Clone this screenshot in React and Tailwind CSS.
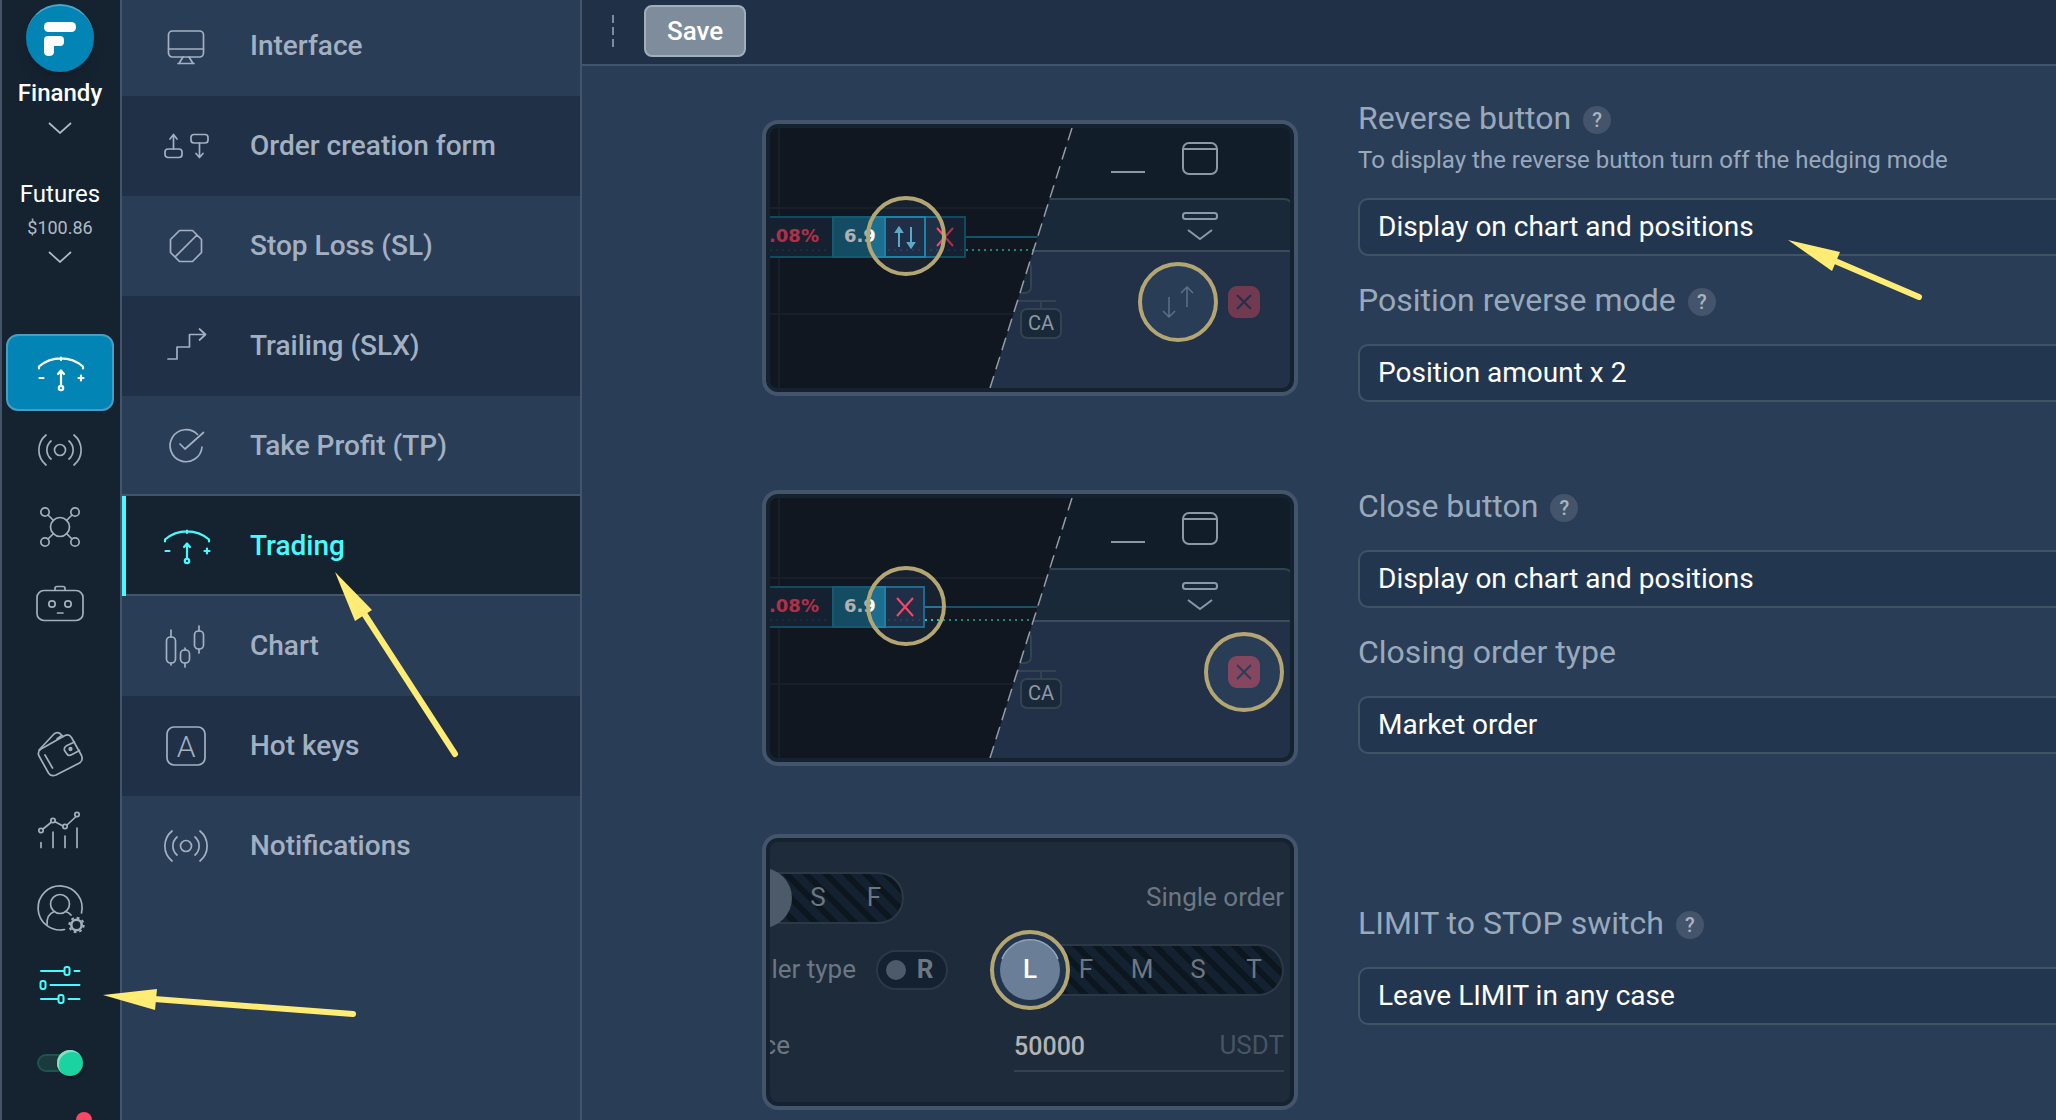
import { useState } from "react";
import clsx from "clsx";

const FONT = "font-['Roboto','Noto_Sans',sans-serif]";

function Icon({ children, className }) {
  return (
    <svg
      viewBox="0 0 48 48"
      className={clsx("size-12 shrink-0 overflow-visible", className)}
      fill="none"
      stroke="currentColor"
      strokeWidth="1.7"
      strokeLinecap="round"
      strokeLinejoin="round"
      aria-hidden="true"
    >
      {children}
    </svg>
  );
}

function GaugeIcon() {
  return (
    <Icon>
      <g strokeWidth="2.2">
        <path d="M3 19.5V17.5A34 34 0 0 1 47 17.5V19.5M25 8.5V11" />
        <path d="M25 22V36M22 25L25 21.5L28 25" />
        <circle cx="25" cy="39" r="2.2" />
        <path d="M3.5 29H7.5M45 26.5V31.5M42.5 29H47.5" />
      </g>
    </Icon>
  );
}

function SignalIcon() {
  return (
    <Icon>
      <circle cx="24" cy="24" r="5.5" />
      <path d="M15 15C9.5 20 9.5 28 15 33M33 15C38.5 20 38.5 28 33 33" />
      <path d="M10 9C.5 17 .5 31 10 39M38 9C47.5 17 47.5 31 38 39" />
    </Icon>
  );
}

function MonitorIcon() {
  return (
    <Icon>
      <rect x="6.5" y="9" width="35" height="26" rx="4" />
      <path d="M6.5 27H41.5M21 35L17 41.5M27 35L31 41.5M16 41.5H32" />
    </Icon>
  );
}

function OrderIcon() {
  return (
    <Icon>
      <path d="M11.5 27V13M8 17L11.5 12.5L15 17M37.5 21V35M34 31.5L37.5 35.5L41 31.5" />
      <rect x="3" y="27" width="17" height="8.5" rx="3" />
      <rect x="29" y="12.5" width="17" height="8.5" rx="3" />
    </Icon>
  );
}

function StopIcon() {
  return (
    <Icon>
      <path d="M17.5 8.5H30.5L39.5 17.5V30.5L30.5 39.5H17.5L8.5 30.5V17.5ZM35 13L13 35" />
    </Icon>
  );
}

function TrailingIcon() {
  return (
    <Icon>
      <path d="M6 37H15V25H27.5V12.5H43.5M37.5 7L43.5 12.5L37.5 18" />
    </Icon>
  );
}

function TakeProfitIcon() {
  return (
    <Icon>
      <path d="M35.5 12.5A16 16 0 1 0 40 25M18 22L23 27L41.5 10.5" />
    </Icon>
  );
}

function CandlesIcon() {
  return (
    <Icon>
      <rect x="4.5" y="15" width="9" height="26" rx="4" />
      <rect x="18.5" y="28" width="9" height="13" rx="4" />
      <rect x="32.5" y="9" width="9" height="18" rx="4" />
      <path d="M9 8V15M9 41V43M23 26V28M23 41V45M37 4V9M37 27V31" />
    </Icon>
  );
}

function HotKeyIcon() {
  return (
    <Icon>
      <rect x="5" y="5" width="38" height="38" rx="7" />
      <text x="24" y="35" textAnchor="middle" fontSize="30" fontWeight="300" fill="currentColor" stroke="none">
        A
      </text>
    </Icon>
  );
}

function NodesIcon() {
  return (
    <Icon>
      <circle cx="24" cy="24" r="9.5" />
      <circle cx="9" cy="9" r="4.2" />
      <circle cx="39" cy="9" r="4.2" />
      <circle cx="9" cy="39" r="4.2" />
      <circle cx="39" cy="39" r="4.2" />
      <path d="M12 12L17.5 17.5M36 12L30.5 17.5M12 36L17.5 30.5M36 36L30.5 30.5" />
    </Icon>
  );
}

function RobotIcon() {
  return (
    <Icon>
      <rect x="1" y="10.5" width="46" height="30" rx="7" />
      <path d="M19 10V8.5Q19 6.5 21 6.5H27Q29 6.5 29 8.5V10M21.5 33H27" />
      <circle cx="16" cy="24" r="3.2" />
      <circle cx="32" cy="24" r="3.2" />
    </Icon>
  );
}

function WalletIcon() {
  return (
    <Icon>
      <path d="M5 19L29 5.5Q33 3.5 35.5 7.5L45.5 25.5Q47.5 30.5 43.5 33L20 45Q15 47 12.5 43L3 26Q1 21.5 5 19Z" />
      <path d="M3 20L18 4Q21 1.5 24 3.5L27 6.5M21 9L25 6" />
      <path d="M38.5 12L31 15.5Q27.5 17.5 28.5 20.5L31 24Q32.5 26.5 36 24.5L43.5 20.5" />
      <path d="M9 25L16.5 38" />
      <circle cx="34.5" cy="19" r="1.3" fill="currentColor" />
    </Icon>
  );
}

function StatsIcon() {
  return (
    <Icon>
      <path d="M7 22L15 15.5M19.5 15L27 19M31 18L39.5 10" />
      <circle cx="5" cy="23.5" r="2.2" />
      <circle cx="17" cy="13.5" r="2.2" />
      <circle cx="29" cy="19.5" r="2.2" />
      <circle cx="41" cy="7.5" r="2.2" />
      <path d="M5 35.5V40.5M17 25V40.5M29 29V40.5M41 21V40.5" />
    </Icon>
  );
}

function AccountIcon() {
  return (
    <Icon>
      <path d="M28.5 45.5A22 22 0 1 1 45.5 29" />
      <circle cx="24" cy="20" r="9.5" />
      <path d="M11 41C10.5 33 14 29 18.5 27.5M29.5 27.5Q33 28.5 35 31" />
      <circle cx="40.5" cy="41" r="5.2" strokeWidth="2.6" />
      <circle cx="40.5" cy="41" r="7.2" strokeWidth="2" strokeDasharray="2.8 2.85" strokeLinecap="butt" />
    </Icon>
  );
}

function SlidersIcon() {
  return (
    <Icon>
      <g strokeWidth="2">
        <path d="M5 10H28M38.5 10H43.5M14.5 24H43.5M5 38H22M32.5 38H43.5" />
        <rect x="28.5" y="6" width="5" height="8" rx="2" />
        <rect x="4.5" y="20" width="5" height="8" rx="2" />
        <rect x="22.5" y="34" width="5" height="8" rx="2" />
      </g>
    </Icon>
  );
}

function ChevronDown() {
  return (
    <svg viewBox="0 0 24 12" className="h-3 w-6" fill="none" stroke="currentColor" strokeWidth="1.7" aria-hidden="true">
      <path d="M1 1L12 11L23 1" />
    </svg>
  );
}

const menuItems = [
  { id: "interface", label: "Interface", icon: MonitorIcon },
  { id: "order", label: "Order creation form", icon: OrderIcon },
  { id: "sl", label: "Stop Loss (SL)", icon: StopIcon },
  { id: "slx", label: "Trailing (SLX)", icon: TrailingIcon },
  { id: "tp", label: "Take Profit (TP)", icon: TakeProfitIcon },
  { id: "trading", label: "Trading", icon: GaugeIcon },
  { id: "chart", label: "Chart", icon: CandlesIcon },
  { id: "hotkeys", label: "Hot keys", icon: HotKeyIcon },
  { id: "notifications", label: "Notifications", icon: SignalIcon },
];

const topTools = [
  { label: "Terminal", icon: GaugeIcon, active: true },
  { label: "Signals", icon: SignalIcon },
  { label: "Network", icon: NodesIcon },
  { label: "Bots", icon: RobotIcon },
];

const bottomTools = [
  { label: "Wallet", icon: WalletIcon },
  { label: "Statistics", icon: StatsIcon },
  { label: "Account", icon: AccountIcon },
  { label: "Settings", icon: SlidersIcon, highlighted: true },
];

function RailButton({ label, icon: ToolIcon, active, highlighted }) {
  return (
    <button
      type="button"
      aria-label={label}
      className={clsx(
        "flex h-[77px] w-[108px] items-center justify-center rounded-xl",
        active && "border-2 border-[#4b9cc1] bg-[#0285b5] text-white",
        highlighted && "text-[#46fbff]",
      )}
    >
      <ToolIcon />
    </button>
  );
}

function Rail() {
  const [online, setOnline] = useState(true);

  return (
    <aside className="flex w-[122px] shrink-0 flex-col items-center border-x-2 border-[#44546a] bg-[#152230] pt-1 pr-0.5 text-[#a2afbe]">
      <button type="button" className="flex flex-col items-center text-[#b0bac6]">
        <span className="flex size-[68px] shrink-0 items-center justify-center rounded-full border-t-2 border-[#4aa9cd] bg-[#0285b5] shadow-lg">
          <svg viewBox="0 0 32 34" className="h-[34px] w-8" fill="white" aria-hidden="true">
            <rect x="0" y="0" width="32" height="10" rx="4.5" />
            <path d="M4 14H16Q20 14 20 18V20Q20 24 16 24H10V30Q10 34 5 34Q0 34 0 30V18Q0 14 4 14Z" />
          </svg>
        </span>
        <span className="mt-[7px] mb-[15px] text-2xl leading-7 font-medium text-white">Finandy</span>
        <ChevronDown />
      </button>

      <button type="button" className="mt-[46px] flex flex-col items-center text-[#b0bac6]">
        <span className="text-2xl leading-7 text-white">Futures</span>
        <span className="mt-2.5 mb-[13px] text-lg leading-5">$100.86</span>
        <ChevronDown />
      </button>

      <div className="mt-[71px] flex flex-col">
        {topTools.map((tool) => (
          <RailButton key={tool.label} {...tool} />
        ))}
      </div>

      <div className="mt-[73px] flex flex-col">
        {bottomTools.map((tool) => (
          <RailButton key={tool.label} {...tool} />
        ))}
      </div>

      <label className="relative mt-[27px] flex h-[26px] w-[46px] shrink-0 items-center">
        <input
          type="checkbox"
          aria-label="Online"
          checked={online}
          onChange={(event) => setOnline(event.target.checked)}
          className="peer sr-only"
        />
        <span className="h-[18px] w-9 rounded-full border-2 border-[#1d544f] bg-[#1b3a40]" />
        <span className="absolute left-0 size-[26px] rounded-full bg-[#1ad3a0] shadow-[inset_2px_2px_0_#8fdcc3,1px_2px_2px_#0c161f] peer-checked:left-5" />
      </label>

      <span className="mt-9 ml-12 size-4 shrink-0 rounded-full bg-[#fb4667]" />
    </aside>
  );
}

function SettingsMenu({ current, onSelect }) {
  return (
    <nav className="-mt-1 w-[460px] shrink-0 border-r-2 border-[#44546a]">
      {menuItems.map(({ id, label, icon: ItemIcon }) => (
        <button
          key={id}
          type="button"
          onClick={() => onSelect(id)}
          className={clsx(
            "relative flex h-[100px] w-full items-center gap-10 pl-10 text-left text-[28px] leading-8 font-medium",
            id === current
              ? "bg-[#152230] text-[#46fbff] shadow-[0_-2px_0_#44546a,inset_0_-2px_0_#44546a]"
              : "text-[#a2b0c1] even:bg-[#1f3047]",
          )}
        >
          {id === current && <span className="absolute inset-y-0 left-0 w-1 bg-[#46fbff]" />}
          <ItemIcon />
          {label}
        </button>
      ))}
    </nav>
  );
}

function PreviewFrame({ label, children }) {
  return (
    <div className="h-[276px] w-[536px] shrink-0 rounded-2xl border-4 border-[#44546a] bg-[#152230] p-1">
      <svg viewBox="0 0 520 260" className="size-full rounded-lg" role="img" aria-label={label}>
        {children}
      </svg>
    </div>
  );
}

// Shared chart / position panel illustration, only the highlighted control differs
function ButtonPreview({ label, variant }) {
  const reverse = variant === "reverse";
  const stripEnd = reverse ? 196 : 155;
  const closeX = reverse ? 175 : 135;
  const clipId = `panel-${variant}`;

  return (
    <PreviewFrame label={label}>
      <defs>
        <clipPath id={clipId}>
          <path d="M302 0H520V260H220Z" />
        </clipPath>
      </defs>

      <rect width="520" height="260" fill="#172130" />
      <path d="M9 0V260M0 80H302M0 186H302" stroke="#242d3b" strokeWidth="2" />
      <path d={`M${stripEnd} 109H280`} stroke="#1e7898" strokeWidth="2" />
      <path d={`M${stripEnd} 122H280`} stroke="#2cc0a6" strokeWidth="2" strokeDasharray="2 4" />
      <rect x="-4" y="89" width={stripEnd + 3} height="40" fill="#1f2f47" stroke="#1b6c8a" strokeWidth="2" />
      <rect x="63" y="89" width="52" height="40" fill="#1c6e8e" stroke="#1f81a4" strokeWidth="2" />
      <path
        d={`M0 122H60M118 122H${stripEnd - 3}`}
        stroke="#2a4a5c"
        strokeWidth="2"
        strokeDasharray="2 4"
        opacity="0.7"
      />
      {reverse && <rect x="115" y="89" width="40" height="40" fill="none" stroke="#1f81a4" strokeWidth="2" />}
      <text x="-1" y="114" fontSize="18" fontWeight="700" fontFamily="DejaVu Sans, sans-serif" fill="#fb4667">
        .08%
      </text>
      <text x="74" y="114" fontSize="18" fontWeight="700" fontFamily="DejaVu Sans, sans-serif" fill="#ffffff">
        6.9
      </text>
      {reverse && (
        <g stroke="#5da8c9" fill="#5da8c9" strokeWidth="2">
          <path d="M129 119V101" />
          <path d="M126 104L129 99.5L132 104Z" />
          <path d="M141 99V117" />
          <path d="M138 115L141 119.5L144 115Z" />
        </g>
      )}
      <path
        d={`M${closeX - 8} 100L${closeX + 8} 118M${closeX + 8} 100L${closeX - 8} 118`}
        stroke="#fb4667"
        strokeWidth="2"
      />
      <path
        d="M0 0H302L220 260H0ZM98 108A38 38 0 1 0 174 108A38 38 0 1 0 98 108Z"
        fill="#000000"
        fillOpacity="0.3"
        fillRule="evenodd"
      />
      <circle cx="136" cy="108" r="38" fill="none" stroke="#b3a673" strokeWidth="4" />

      <g clipPath={`url(#${clipId})`}>
        <rect x="200" width="320" height="260" fill="#111d28" />
        <path d="M200 71H514Q519 71 521 75V123H200Z" fill="#1a293a" stroke="#33434f" strokeWidth="2" />
        <rect x="200" y="124" width="320" height="136" fill="#223148" />
        <path d="M200 123H520" stroke="#3d4c5c" strokeWidth="2" />
        <rect x="225" y="134" width="36" height="31" rx="6" fill="#1a293a" stroke="#33434f" strokeWidth="2" />
        <path d="M240 173H286M271 173V181" stroke="#33434f" strokeWidth="2" />
        <rect x="251" y="181" width="40" height="29" rx="6" fill="#1a293a" stroke="#33434f" strokeWidth="2" />
        <text x="271" y="202" textAnchor="middle" fontSize="20" fill="#8d98a6">
          CA
        </text>
      </g>
      <path d="M302 0L220 260" stroke="#959ca4" strokeWidth="1.5" strokeDasharray="13 7" />

      <g fill="none" stroke="#8d98a6" strokeWidth="2">
        <path d="M341 44H375" />
        <rect x="413" y="15" width="34" height="31" rx="6" />
        <path d="M413 21H447" />
        <rect x="413" y="85" width="34" height="6" rx="2.5" />
        <path d="M418 102L430 111L442 102" />
      </g>

      <circle
        cx={reverse ? 408 : 474}
        cy="174"
        r="38"
        fill="#2a3d57"
        stroke="#b3a673"
        strokeWidth="4"
      />
      {reverse && (
        <path
          d="M399 169V189M393 183L399 189L405 183M417 179V159M411 165L417 159L423 165"
          fill="none"
          stroke="#5f6f88"
          strokeWidth="1.5"
        />
      )}
      <rect x="458" y="158" width="32" height="32" rx="9" fill={reverse ? "#713a50" : "#854760"} />
      <path d="M467 167L481 181M481 167L467 181" stroke={reverse ? "#223148" : "#2a3d57"} strokeWidth="2" />
    </PreviewFrame>
  );
}

function SwitchPreview({ label }) {
  return (
    <PreviewFrame label={label}>
      <defs>
        <pattern id="stripes" width="14" height="14" patternUnits="userSpaceOnUse" patternTransform="rotate(-45)">
          <rect width="14" height="14" fill="#142130" />
          <rect width="6" height="14" fill="#0c161f" />
        </pattern>
      </defs>

      <rect width="520" height="260" fill="#1e2b3b" />

      <rect x="-40" y="31" width="173" height="50" rx="25" fill="url(#stripes)" stroke="#2b3946" strokeWidth="2" />
      <circle cx="-8" cy="56" r="30" fill="#4c5a69" />
      <rect x="230" y="103" width="283" height="50" rx="25" fill="url(#stripes)" stroke="#2b3946" strokeWidth="2" />
      <rect x="107" y="109" width="70" height="38" rx="19" fill="#142130" stroke="#2b3946" strokeWidth="2" />
      <circle cx="126" cy="128" r="10" fill="#4c5a69" />

      <g fontSize="26" fill="#6c7784" textAnchor="middle">
        <text x="48" y="64">S</text>
        <text x="104" y="64">F</text>
        <text x="155" y="136" fontWeight="700">R</text>
        <text x="316" y="136">F</text>
        <text x="372" y="136">M</text>
        <text x="428" y="136">S</text>
        <text x="484" y="136">T</text>
      </g>
      <g fontSize="26" fill="#6c7784" textAnchor="end">
        <text x="514" y="64">Single order</text>
        <text x="86" y="136">ler type</text>
        <text x="20" y="212">ce</text>
        <text x="514" y="212" fill="#465464">USDT</text>
      </g>
      <text x="244" y="213" fontSize="25" fontWeight="500" fill="#b3b3b3">
        50000
      </text>
      <path d="M244 229H514" stroke="#34424f" strokeWidth="2" />

      <circle cx="260" cy="128" r="38" fill="#22344c" stroke="#b3a673" strokeWidth="4" />
      <circle cx="260" cy="128" r="30" fill="#6b7e98" />
      <path d="M232 117A30 30 0 0 1 288 117" fill="none" stroke="#93a3ba" strokeWidth="1.5" />
      <text x="260" y="136" fontSize="26" fontWeight="500" fill="#ffffff" textAnchor="middle">
        L
      </text>
    </PreviewFrame>
  );
}

function Field({ id, label, hint, help, options }) {
  return (
    <div>
      <div className="flex h-10 items-center gap-3">
        <label htmlFor={id} className="text-[32px] leading-10 text-[#99a9bc]">
          {label}
        </label>
        {help && (
          <button
            type="button"
            aria-label={`Help: ${label}`}
            className="mt-1 flex size-7 items-center justify-center rounded-full bg-[#44546a] text-xl leading-7 font-medium text-[#a8b4c3]"
          >
            ?
          </button>
        )}
      </div>
      {hint && <p className="mt-2 text-2xl leading-7 text-[#99a9bc]">{hint}</p>}
      <select
        id={id}
        className="mt-6 block h-[58px] w-full appearance-none rounded-l-[10px] border-2 border-r-0 border-[#435366] bg-[#22374f] px-[18px] text-[28px] leading-8 text-white"
      >
        {options.map((option) => (
          <option key={option}>{option}</option>
        ))}
      </select>
    </div>
  );
}

function Section({ preview, children, className }) {
  return (
    <section className={clsx("flex items-center gap-[60px]", className)}>
      {preview}
      <div className="flex min-w-0 flex-1 flex-col gap-6 pb-4">{children}</div>
    </section>
  );
}

function TradingSettings() {
  const displayOptions = ["Display on chart and positions", "Display on chart", "Display on positions"];

  return (
    <div className="pt-8 pl-[180px]">
      <Section className="mb-[68px]" preview={<ButtonPreview variant="reverse" label="Reverse button preview" />}>
        <Field
          id="reverse-button"
          label="Reverse button"
          hint="To display the reverse button turn off the hedging mode"
          help
          options={displayOptions}
        />
        <Field
          id="reverse-mode"
          label="Position reverse mode"
          help
          options={["Position amount x 2", "Position amount"]}
        />
      </Section>

      <Section className="mb-16" preview={<ButtonPreview variant="close" label="Close button preview" />}>
        <Field id="close-button" label="Close button" help options={displayOptions} />
        <Field id="close-type" label="Closing order type" options={["Market order", "Limit order"]} />
      </Section>

      <Section preview={<SwitchPreview label="Limit to stop switch preview" />}>
        <Field
          id="limit-stop"
          label="LIMIT to STOP switch"
          help
          options={["Leave LIMIT in any case", "Switch to STOP"]}
        />
      </Section>
    </div>
  );
}

function Arrow({ className, viewBox, line, head }) {
  return (
    <svg viewBox={viewBox} className={clsx("pointer-events-none absolute", className)} aria-hidden="true">
      <path d={line} stroke="#ffec74" strokeWidth="6" strokeLinecap="round" />
      <path d={head} fill="#ffec74" />
    </svg>
  );
}

function App() {
  const [current, setCurrent] = useState("trading");

  return (
    <div className={clsx("relative flex h-screen overflow-hidden bg-[#2a3d57]", FONT)}>
      <Rail />
      <SettingsMenu current={current} onSelect={setCurrent} />

      <main className="min-w-0 flex-1">
        <header className="flex h-[66px] items-start gap-[30px] border-b-2 border-[#44546a] bg-[#1f3047] pt-[5px] pl-[30px]">
          <svg viewBox="0 0 2 32" className="mt-2.5 h-8 w-0.5" aria-hidden="true">
            <path d="M1 0V32" stroke="#7d8b9d" strokeWidth="2" strokeDasharray="8 4" />
          </svg>
          <button
            type="button"
            className="h-[52px] rounded-lg border-2 border-[#a3aebb] bg-[#7f8c9b] px-[21px] text-[26px] leading-8 font-medium text-white"
          >
            Save
          </button>
        </header>
        <TradingSettings />
      </main>

      <Arrow
        className="top-[570px] left-[330px] h-[190px] w-[135px]"
        viewBox="0 0 135 190"
        line="M35 45L125 184"
        head="M5 2L42 40L25 51Z"
      />
      <Arrow
        className="top-[985px] left-[100px] h-10 w-[260px]"
        viewBox="0 0 260 40"
        line="M54 14L253 29"
        head="M3 10L57 4L55 25Z"
      />
      <Arrow
        className="top-[235px] left-[1785px] h-[70px] w-[140px]"
        viewBox="0 0 140 70"
        line="M50 26L134 62"
        head="M3 5L55 17L47 36Z"
      />
    </div>
  );
}

export default App;
